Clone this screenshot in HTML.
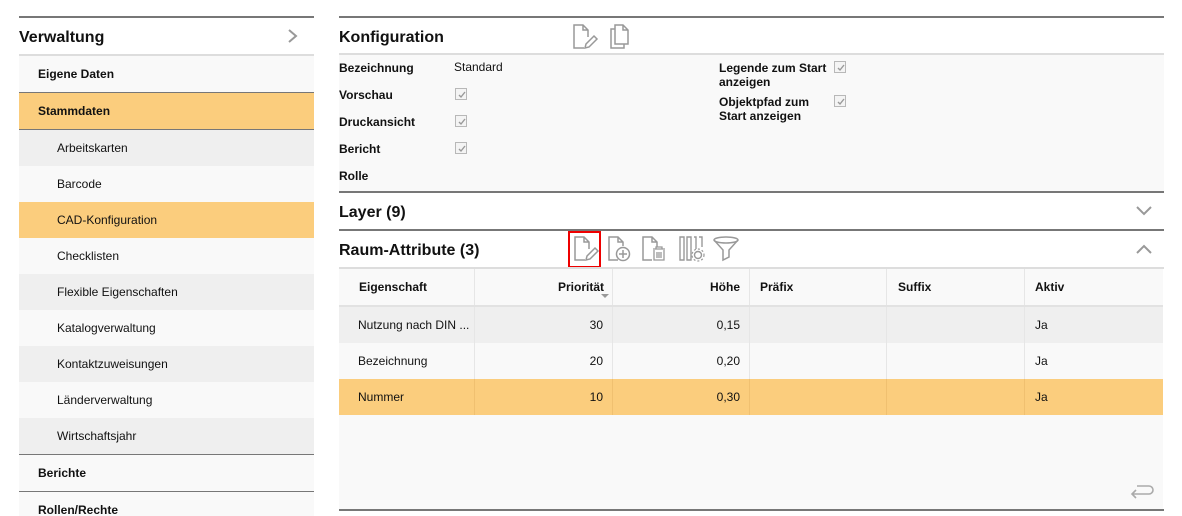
<!DOCTYPE html>
<html><head><meta charset="utf-8">
<style>
*{margin:0;padding:0;box-sizing:border-box}
html,body{width:1182px;height:516px;overflow:hidden}
body{background:#fff;font-family:"Liberation Sans",Arial,sans-serif;color:#111;position:relative}
.a{position:absolute}
.side{left:19px;width:295px}
.row{position:absolute;left:0;width:295px;height:36px;line-height:36px;font-size:12px}
.b{font-weight:bold}
.cb{position:absolute;width:12px;height:12px;border:1px solid #b8b8b8;background:#f4f4f4}
.cb svg{position:absolute;left:1px;top:1px}
.lbl{position:absolute;font-size:12px;font-weight:bold}
.th{position:absolute;top:0;height:36px;line-height:36px;font-size:12px;font-weight:bold;border-right:1px solid #e6e6e6}
.td{position:absolute;top:0;height:36px;line-height:36px;font-size:12px;border-right:1px solid #e6e6e6}
.h{position:absolute;height:36px;line-height:40px;font-size:16px;font-weight:bold}
</style></head><body>

<div class="a side" style="top:16px;height:2px;background:#777"></div>
<div class="h side" style="top:18px;">Verwaltung
<svg class="a" style="left:268px;top:11px" width="12" height="14" viewBox="0 0 12 14"><path d="M2 1 L9 7 L2 13" fill="none" stroke="#999" stroke-width="2"/></svg></div>
<div class="a side" style="top:54px;height:2px;background:#ddd"></div>
<div class="a side" style="top:56px;height:460px;">
 <div class="row b" style="top:0;background:#f9f9f9;padding-left:19px">Eigene Daten</div>
 <div class="a" style="left:0;top:36px;width:295px;height:1px;background:#777"></div>
 <div class="row b" style="top:37px;background:#fbcd7d;padding-left:19px">Stammdaten</div>
 <div class="a" style="left:0;top:73px;width:295px;height:1px;background:#777"></div>
 <div class="row" style="top:74px;background:#efefef;padding-left:38px">Arbeitskarten</div>
 <div class="row" style="top:110px;background:#f9f9f9;padding-left:38px">Barcode</div>
 <div class="row" style="top:146px;background:#fbcd7d;padding-left:38px">CAD-Konfiguration</div>
 <div class="row" style="top:182px;background:#f9f9f9;padding-left:38px">Checklisten</div>
 <div class="row" style="top:218px;background:#efefef;padding-left:38px">Flexible Eigenschaften</div>
 <div class="row" style="top:254px;background:#f9f9f9;padding-left:38px">Katalogverwaltung</div>
 <div class="row" style="top:290px;background:#efefef;padding-left:38px">Kontaktzuweisungen</div>
 <div class="row" style="top:326px;background:#f9f9f9;padding-left:38px">Länderverwaltung</div>
 <div class="row" style="top:362px;background:#efefef;padding-left:38px">Wirtschaftsjahr</div>
 <div class="a" style="left:0;top:398px;width:295px;height:1px;background:#777"></div>
 <div class="row b" style="top:399px;background:#f9f9f9;padding-left:19px">Berichte</div>
 <div class="a" style="left:0;top:435px;width:295px;height:1px;background:#777"></div>
 <div class="row b" style="top:436px;background:#f9f9f9;padding-left:19px">Rollen/Rechte</div>
</div>

<div class="a" style="left:339px;top:16px;width:825px;height:2px;background:#777"></div>
<div class="h" style="left:339px;top:18px;">Konfiguration</div>
<svg class="a" style="left:572px;top:24px" width="28" height="26" viewBox="0 0 28 26"><path d="M16 13 V6 L11 1 H2 V24 H12 M11 1 V6 H16" fill="none" stroke="#999" stroke-width="1.5"/><path d="M13 24 L14 20 L22 12 L25 15 L17 23 Z" fill="none" stroke="#999" stroke-width="1.5"/></svg>
<svg class="a" style="left:609px;top:24px" width="22" height="26" viewBox="0 0 22 26"><path d="M6 1 H14 L19 6 V20 H6 Z M14 1 V6 H19" fill="none" stroke="#999" stroke-width="1.5"/><path d="M6 5 H2 V24 H15 V20" fill="none" stroke="#999" stroke-width="1.5"/></svg>
<div class="a" style="left:339px;top:53px;width:825px;height:2px;background:#ddd"></div>
<div class="a" style="left:339px;top:55px;width:825px;height:136px;background:#f9f9f9">
 <div class="lbl" style="left:0;top:6px">Bezeichnung</div>
 <div class="a" style="left:115px;top:5px;font-size:12px">Standard</div>
 <div class="lbl" style="left:0;top:33px">Vorschau</div>
 <div class="lbl" style="left:0;top:60px">Druckansicht</div>
 <div class="lbl" style="left:0;top:87px">Bericht</div>
 <div class="lbl" style="left:0;top:114px">Rolle</div>
 <div class="cb" style="left:116px;top:33px"><svg width="10" height="10" viewBox="0 0 10 10"><path d="M2 5 L4 7 L8 2" fill="none" stroke="#999" stroke-width="1.4"/></svg></div>
 <div class="cb" style="left:116px;top:60px"><svg width="10" height="10" viewBox="0 0 10 10"><path d="M2 5 L4 7 L8 2" fill="none" stroke="#999" stroke-width="1.4"/></svg></div>
 <div class="cb" style="left:116px;top:87px"><svg width="10" height="10" viewBox="0 0 10 10"><path d="M2 5 L4 7 L8 2" fill="none" stroke="#999" stroke-width="1.4"/></svg></div>
 <div class="lbl" style="left:380px;top:6px;line-height:14px">Legende zum Start<br>anzeigen</div>
 <div class="cb" style="left:495px;top:6px"><svg width="10" height="10" viewBox="0 0 10 10"><path d="M2 5 L4 7 L8 2" fill="none" stroke="#999" stroke-width="1.4"/></svg></div>
 <div class="lbl" style="left:380px;top:40px;line-height:14px">Objektpfad zum<br>Start anzeigen</div>
 <div class="cb" style="left:495px;top:40px"><svg width="10" height="10" viewBox="0 0 10 10"><path d="M2 5 L4 7 L8 2" fill="none" stroke="#999" stroke-width="1.4"/></svg></div>
</div>
<div class="a" style="left:339px;top:191px;width:825px;height:2px;background:#777"></div>
<div class="h" style="left:339px;top:193px;">Layer (9)</div>
<svg class="a" style="left:1136px;top:205px" width="16" height="12" viewBox="0 0 16 12"><path d="M1 2 L8 9 L15 2" fill="none" stroke="#999" stroke-width="2"/></svg>
<div class="a" style="left:339px;top:229px;width:825px;height:2px;background:#777"></div>
<div class="h" style="left:339px;top:231px;">Raum-Attribute (3)</div>
<svg class="a" style="left:1136px;top:243px" width="16" height="12" viewBox="0 0 16 12"><path d="M1 10 L8 3 L15 10" fill="none" stroke="#999" stroke-width="2"/></svg>
<div class="a" style="left:568px;top:231px;width:33px;height:37px;border:2px solid #e00"></div>
<svg class="a" style="left:573px;top:236px" width="28" height="26" viewBox="0 0 28 26"><path d="M16 13 V6 L11 1 H2 V24 H12 M11 1 V6 H16" fill="none" stroke="#999" stroke-width="1.5"/><path d="M13 24 L14 20 L22 12 L25 15 L17 23 Z" fill="none" stroke="#999" stroke-width="1.5"/></svg>
<svg class="a" style="left:607px;top:236px" width="26" height="26" viewBox="0 0 26 26"><path d="M11 24 H2 V1 H11 L16 6 V10 M11 1 V6 H16" fill="none" stroke="#999" stroke-width="1.5"/><circle cx="16" cy="18" r="6.5" fill="none" stroke="#999" stroke-width="1.5"/><path d="M16 14 V22 M12 18 H20" stroke="#999" stroke-width="1.5"/></svg>
<svg class="a" style="left:641px;top:236px" width="26" height="26" viewBox="0 0 26 26"><path d="M11 24 H2 V1 H11 L16 6 V11 M11 1 V6 H16" fill="none" stroke="#999" stroke-width="1.5"/><path d="M12 13 H24 M15 13 V11 H21 V13 M13 14 V24 H23 V14 M16 16 V22 M18 16 V22 M20 16 V22" fill="none" stroke="#999" stroke-width="1.3"/></svg>
<svg class="a" style="left:679px;top:236px" width="27" height="26" viewBox="0 0 27 26"><path d="M1 1 H5 V24 H1 Z M8 1 H12 V24 H8 Z M15 1 H17 V13 M20 1 H23 V11" fill="none" stroke="#999" stroke-width="1.4"/><circle cx="19" cy="19" r="3.5" fill="none" stroke="#999" stroke-width="1.4"/><circle cx="19" cy="19" r="6" fill="none" stroke="#999" stroke-width="1.2" stroke-dasharray="2 2"/></svg>
<svg class="a" style="left:712px;top:236px" width="28" height="26" viewBox="0 0 28 26"><ellipse cx="14" cy="4" rx="12" ry="3" fill="none" stroke="#999" stroke-width="1.5"/><path d="M2 4 L11 14 V24 L17 21 V14 L26 4" fill="none" stroke="#999" stroke-width="1.5"/></svg>
<div class="a" style="left:339px;top:267px;width:825px;height:2px;background:#ddd"></div>
<div class="a" style="left:339px;top:269px;width:824px;height:240px;background:#f9f9f9">
 <div class="a" style="left:0;top:0;width:824px;height:36px">
  <div class="th" style="left:0;width:136px;padding-left:20px">Eigenschaft</div>
  <div class="th" style="left:136px;width:138px;text-align:right;padding-right:8px">Priorität</div>
  <svg class="a" style="left:262px;top:25px" width="8" height="5"><path d="M0 0 H8 L4 4 Z" fill="#999"/></svg>
  <div class="th" style="left:274px;width:137px;text-align:right;padding-right:9px">Höhe</div>
  <div class="th" style="left:411px;width:137px;padding-left:10px">Präfix</div>
  <div class="th" style="left:548px;width:138px;padding-left:11px">Suffix</div>
  <div class="th" style="left:686px;width:138px;padding-left:10px;border-right:none">Aktiv</div>
 </div>
 <div class="a" style="left:0;top:36px;width:824px;height:2px;background:#e2e2e2"></div>
 <div class="a" style="left:0;top:38px;width:824px;height:36px;background:#efefef">
  <div class="td" style="left:0;width:136px;padding-left:19px">Nutzung nach DIN ...</div>
  <div class="td" style="left:136px;width:138px;text-align:right;padding-right:9px">30</div>
  <div class="td" style="left:274px;width:137px;text-align:right;padding-right:9px">0,15</div>
  <div class="td" style="left:411px;width:137px"></div>
  <div class="td" style="left:548px;width:138px"></div>
  <div class="td" style="left:686px;width:138px;padding-left:10px;border-right:none">Ja</div>
 </div>
 <div class="a" style="left:0;top:74px;width:824px;height:36px;background:#f9f9f9">
  <div class="td" style="left:0;width:136px;padding-left:19px">Bezeichnung</div>
  <div class="td" style="left:136px;width:138px;text-align:right;padding-right:9px">20</div>
  <div class="td" style="left:274px;width:137px;text-align:right;padding-right:9px">0,20</div>
  <div class="td" style="left:411px;width:137px"></div>
  <div class="td" style="left:548px;width:138px"></div>
  <div class="td" style="left:686px;width:138px;padding-left:10px;border-right:none">Ja</div>
 </div>
 <div class="a" style="left:0;top:110px;width:824px;height:36px;background:#fbcd7d">
  <div class="td" style="left:0;width:136px;padding-left:19px;border-color:#f0c070">Nummer</div>
  <div class="td" style="left:136px;width:138px;text-align:right;padding-right:9px;border-color:#f0c070">10</div>
  <div class="td" style="left:274px;width:137px;text-align:right;padding-right:9px;border-color:#f0c070">0,30</div>
  <div class="td" style="left:411px;width:137px;border-color:#f0c070"></div>
  <div class="td" style="left:548px;width:138px;border-color:#f0c070"></div>
  <div class="td" style="left:686px;width:138px;padding-left:10px;border-right:none">Ja</div>
 </div>
 <svg class="a" style="left:790px;top:214px" width="26" height="18" viewBox="0 0 26 18"><path d="M8 3 H20 A4 4 0 0 1 20 11 H3 M7 7 L3 11 L7 15" fill="none" stroke="#aaa" stroke-width="1.6"/></svg>
</div>
<div class="a" style="left:339px;top:509px;width:825px;height:2px;background:#777"></div>
</body></html>
